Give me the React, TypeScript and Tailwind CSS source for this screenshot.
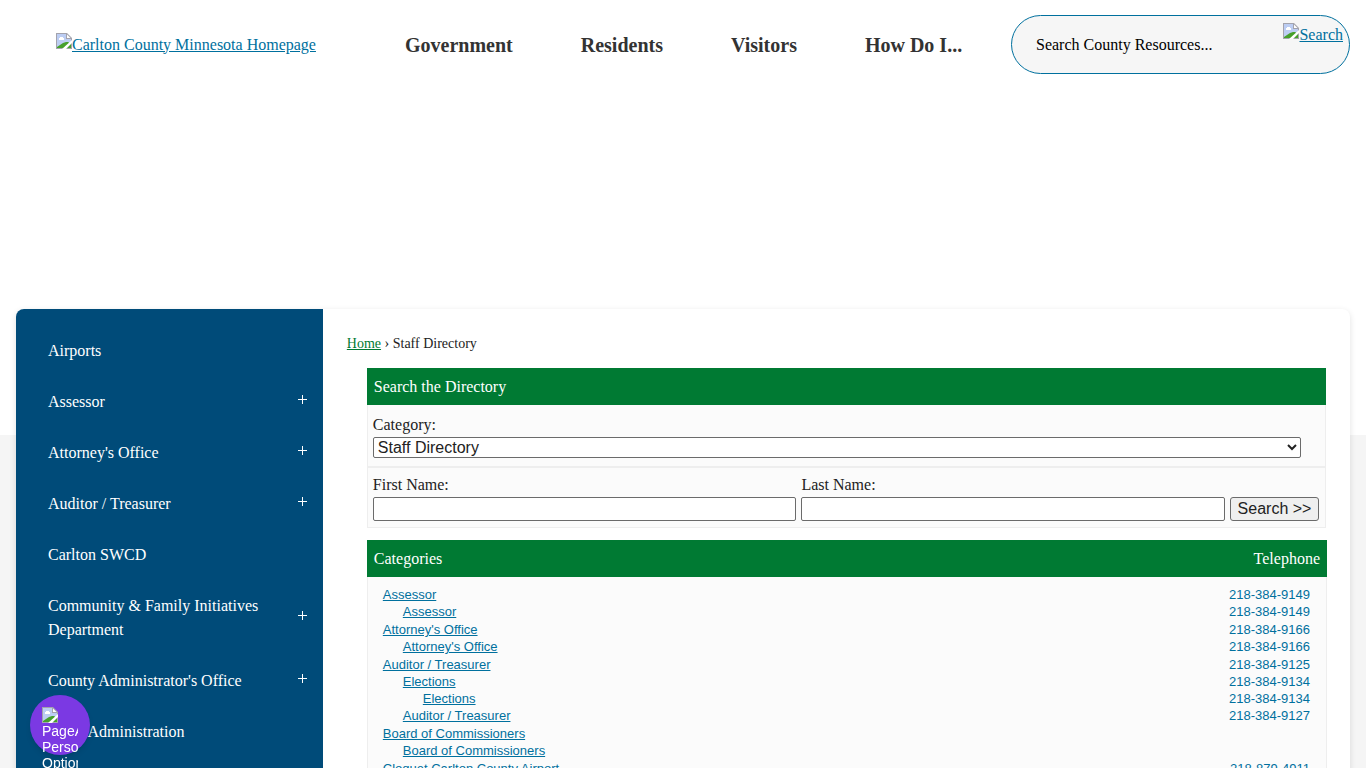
import type { ReactNode } from "react";

type SideItem = {
  label: string;
  expandable?: boolean;
};

type Category = {
  name: string;
  level: number;
  phone?: string;
};

const navItems = ["Government", "Residents", "Visitors", "How Do I..."];

const sideItems: SideItem[] = [
  { label: "Airports" },
  { label: "Assessor", expandable: true },
  { label: "Attorney's Office", expandable: true },
  { label: "Auditor / Treasurer", expandable: true },
  { label: "Carlton SWCD" },
  { label: "Community & Family Initiatives Department", expandable: true },
  { label: "County Administrator's Office", expandable: true },
  { label: "Court Administration" },
];

const categories: Category[] = [
  { name: "Assessor", level: 0, phone: "218-384-9149" },
  { name: "Assessor", level: 1, phone: "218-384-9149" },
  { name: "Attorney's Office", level: 0, phone: "218-384-9166" },
  { name: "Attorney's Office", level: 1, phone: "218-384-9166" },
  { name: "Auditor / Treasurer", level: 0, phone: "218-384-9125" },
  { name: "Elections", level: 1, phone: "218-384-9134" },
  { name: "Elections", level: 2, phone: "218-384-9134" },
  { name: "Auditor / Treasurer", level: 1, phone: "218-384-9127" },
  { name: "Board of Commissioners", level: 0 },
  { name: "Board of Commissioners", level: 1 },
  { name: "Cloquet Carlton County Airport", level: 0, phone: "218-879-4911" },
];

const indents = ["pl-0 pt-px", "pl-5", "pl-10"];

function MissingImage() {
  return (
    <svg
      width="16"
      height="16"
      viewBox="0 0 16 16"
      className="shrink-0"
      aria-hidden="true"
    >
      <path d="M0 0H11L16 5V16H0Z" fill="#a3a3ad" />
      <path d="M1 1H10V6H15V15H1Z" fill="#bccdf3" />
      <path d="M11 1.500V5H14.500Z" fill="#ffffff" />
      <path d="M3 7V5H4V4H7V5H8V7Z" fill="#ffffff" />
      <path d="M1 15V14L4 12L7 10L10 9H12L15 11V15Z" fill="#46a02c" />
      <path d="M16 7V10L10 16H6Z" fill="#ffffff" />
    </svg>
  );
}

function BarTitle({ children }: { children: ReactNode }) {
  return (
    <div className="flex h-[37px] items-center justify-between bg-[#007a33] px-[7px] text-white">
      {children}
    </div>
  );
}

function Header() {
  return (
    <header className="flex items-start px-4 pt-[15px]">

      {/* LOGO */}
      <div className="flex h-[59px] w-[355px] shrink-0 items-center pl-10">
        <a href="#" className="flex items-start text-[#00709e] underline">
          <MissingImage />
          <span>Carlton County Minnesota Homepage</span>
        </a>
      </div>

      <nav className="flex h-[59px] flex-1 items-center">
        {navItems.map((item) => (
          <a
            key={item}
            href="#"
            className="px-[34px] text-xl font-bold whitespace-nowrap text-[#333333]"
          >
            {item}
          </a>
        ))}
      </nav>

      {/* SEARCH */}
      <form className="flex h-[59px] w-[339px] shrink-0 justify-between rounded-full border border-[#00709e] bg-[#f6f6f6] pr-1.5 pl-6">
        <input
          type="text"
          aria-label="Search County Resources"
          placeholder="Search County Resources..."
          className="min-w-0 flex-1 bg-transparent placeholder:text-black outline-none"
        />
        <a href="#" className="mt-[7px] flex items-start text-[#00709e] underline">
          <MissingImage />
          <span>Search</span>
        </a>
      </form>

    </header>
  );
}

function Sidebar() {
  return (
    <aside className="w-[23%] shrink-0 rounded-l-lg bg-[#004b79] pt-4 text-white">
      <ul>
        {sideItems.map((item) => (
          <li key={item.label} className="flex items-center pr-3 pl-8">
            <a href="#" className="flex-1 pt-[14px] pr-8 pb-[13px] leading-6">
              {item.label}
            </a>
            {item.expandable && (
              <button
                type="button"
                aria-label={"Expand " + item.label}
                className="flex size-4 items-center justify-center"
              >
                <svg width="9" height="9" viewBox="0 0 9 9" stroke="#fff" className="mb-1">
                  <path d="M4.500 0V9M0 4.500H9" />
                </svg>
              </button>
            )}
          </li>
        ))}
      </ul>
    </aside>
  );
}

function SearchForm() {
  return (
    <form>
      <BarTitle>
        <h2>Search the Directory</h2>
      </BarTitle>

      <div className="border border-t-0 border-[#eeeeee] bg-[#fbfbfb]">
        <div className="border-b-2 border-[#eeeeee] px-[5px] pt-2 pb-2">
          <label htmlFor="category" className="block leading-6">
            Category:
          </label>
          <select
            id="category"
            className="block h-[21px] w-[98%] rounded-xs border border-[#6b6b6b] bg-white font-['Liberation_Sans',sans-serif] text-[#222222]"
          >
            <option>Staff Directory</option>
          </select>
        </div>

        <div className="flex items-end gap-[5px] pt-[5px] pr-1.5 pb-1.5 pl-[5px]">
          <div className="flex-1">
            <label htmlFor="first" className="block leading-6">
              First Name:
            </label>
            <input
              id="first"
              type="text"
              className="block h-6 w-full rounded-xs border border-[#6b6b6b] bg-white px-1"
            />
          </div>
          <div className="flex-1">
            <label htmlFor="last" className="block leading-6">
              Last Name:
            </label>
            <input
              id="last"
              type="text"
              className="block h-6 w-full rounded-xs border border-[#6b6b6b] bg-white px-1"
            />
          </div>
          <button
            type="button"
            className="h-6 w-[89px] rounded-[3px] border border-[#6b6b6b] bg-[#efefef] font-['Liberation_Sans',sans-serif] leading-5 whitespace-nowrap text-[#222222]"
          >
            Search &gt;&gt;
          </button>
        </div>
      </div>
    </form>
  );
}

function CategoryList() {
  return (
    <section className="mt-3 -mr-px">
      <BarTitle>
        <h2>Categories</h2>
        <span>Telephone</span>
      </BarTitle>

      <div className="border border-t-0 border-[#eeeeee] bg-[#fbfbfb] pt-2 pr-4 pb-4 pl-[15px]">
        <table className="w-full font-['Liberation_Sans',sans-serif] text-[13px] leading-[17px] text-[#00709e]">
          <tbody>
            {categories.map((row, i) => (
              <tr key={i}>
                <td className={indents[row.level]}>
                  <a href="#" className="underline">
                    {row.name}
                  </a>
                </td>
                <td className="text-right align-bottom">{row.phone}</td>
              </tr>
            ))}
          </tbody>
        </table>
      </div>
    </section>
  );
}

export default function App() {
  return (
    <div className="min-h-screen bg-[#f5f5f5] font-['Liberation_Serif',serif] text-base text-[#222222]">

      {/* BANNER */}
      <div className="h-[435px] bg-white">
        <Header />
      </div>

      <div className="relative mx-4 -mt-[126px] flex rounded-lg bg-white shadow-[0_2px_6px_rgba(0,0,0,0.12)]">
        <Sidebar />

        <main className="min-w-0 flex-1 px-6 pt-[25px] pb-6">
          <p className="mb-3.5 text-sm leading-5">
            <a href="#" className="text-[#007a33] underline">
              Home
            </a>
            {" › "}
            Staff Directory
          </p>
          <div className="pl-5">
            <SearchForm />
            <CategoryList />
          </div>
        </main>
      </div>

      {/* PAGE ASSIST BUTTON */}
      <button
        type="button"
        className="fixed bottom-[13px] left-[30px] size-[60px] rounded-full bg-[#7b39e3] px-3 pt-3 text-left font-['Liberation_Sans',sans-serif] text-sm leading-4 text-white shadow-md"
      >
        <span className="block h-[61px] overflow-hidden">
          <MissingImage />
          PageAssist Personalization Options
        </span>
      </button>

    </div>
  );
}
